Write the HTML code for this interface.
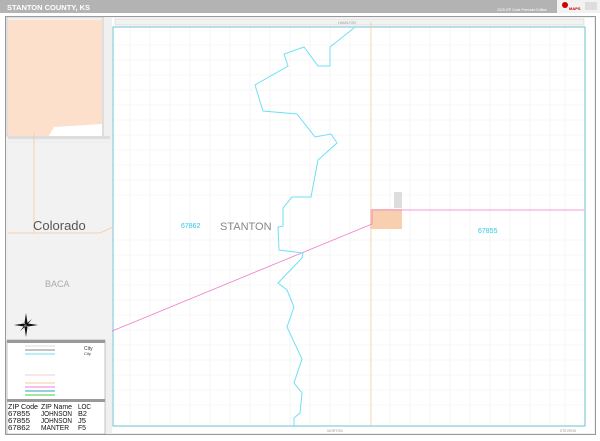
<!DOCTYPE html>
<html><head><meta charset="utf-8"><style>
body{margin:0;width:600px;height:436px;overflow:hidden;background:#fff;font-family:"Liberation Sans",sans-serif}
</style></head><body>
<svg width="600" height="436" xmlns="http://www.w3.org/2000/svg" font-family="Liberation Sans, sans-serif">
<rect x="0" y="0" width="600" height="436" fill="#fff"/>
<rect x="0" y="0" width="600" height="13" fill="#b3b3b3"/>
<text x="7" y="10" font-size="7.5" font-weight="bold" fill="#fff">STANTON COUNTY, KS</text>
<text x="497" y="11" font-size="3.5" fill="#fff">2025 ZIP Code Premium Edition</text>
<rect x="557" y="0" width="43" height="13" fill="#f2f2f2"/>
<circle cx="565" cy="5" r="3" fill="#c00"/>
<text x="569" y="10" font-size="4" font-weight="bold" fill="#c00">MAPS</text>
<rect x="585" y="2" width="12" height="8" fill="#ddd"/>
<rect x="5.5" y="16.5" width="590" height="418" fill="#f0f0f0" stroke="#999"/>
<rect x="112" y="18" width="482" height="415" fill="#fff"/>
<g stroke="#f0f0f0" stroke-width="0.6">
<path d="M130 22V426M150 22V426M170 22V426M190 22V426M210 22V426M230 22V426M250 22V426M270 22V426M290 22V426M310 22V426M330 22V426M350 22V426M390 22V426M410 22V426M430 22V426M450 22V426M470 22V426M490 22V426M510 22V426M530 22V426M550 22V426M565 22V426"/>
<path d="M112 45H584M112 60H584M112 75H584M112 90H584M112 105H584M112 120H584M112 135H584M112 150H584M112 165H584M112 180H584M112 195H584M112 240H584M112 255H584M112 270H584M112 285H584M112 300H584M112 315H584M112 330H584M112 345H584M112 360H584M112 375H584M112 390H584M112 405H584"/>
</g>
<rect x="115" y="19" width="469" height="6" fill="#f2f2f2" stroke="#ccc" stroke-width="0.5"/>
<text x="347" y="24" font-size="3.5" fill="#999" text-anchor="middle">HAMILTON</text>
<text x="335" y="432" font-size="3.5" fill="#999" text-anchor="middle">MORTON</text>
<text x="568" y="432" font-size="3.5" fill="#999" text-anchor="middle">STEVENS</text>
<path d="M113 27H585V426H113Z" fill="none" stroke="#6fc0cc" stroke-width="1"/>
<path d="M371 22V426" stroke="#f5c9a0" stroke-width="0.8"/>
<rect x="370" y="209" width="32" height="20" fill="#f8d0b0"/>
<rect x="394" y="192" width="8" height="16" fill="#ddd"/>
<path d="M100 336L372 224V210H584" fill="none" stroke="#f07cc8" stroke-width="0.8"/>
<path d="M354 28L330 47V66H318L304 47L284 54L288 66L255 85L263 111L297 114L315 137L331 134L337 143L318 160L311 197H292L283 208V226L278 227L279 250L303 253L302 258L278 283L287 290L294 307L287 327L302 359L294 383L302 393L300 413L294 418V427" fill="none" stroke="#6fe0f5" stroke-width="1"/>
<text x="181" y="228" font-size="7" fill="#2cc8e8">67862</text>
<text x="220" y="230" font-size="11" fill="#888">STANTON</text>
<text x="478" y="233" font-size="7" fill="#2cc8e8">67855</text>
<rect x="7" y="17" width="96" height="119" fill="#f0f0f0" stroke="#aaa" stroke-width="0.5"/>
<rect x="8" y="20" width="94" height="117" fill="#fde0cc"/>
<path d="M48 137L54 127L102 124V137Z" fill="#fff"/>
<rect x="8" y="136" width="102" height="3" fill="#ddd"/>
<rect x="8" y="143" width="104" height="196" fill="#f2f2f2"/>
<path d="M34 133V233M8 233H100L113 227" fill="none" stroke="#f5c9a0" stroke-width="0.8"/>
<text x="33" y="230" font-size="13" fill="#555">Colorado</text>
<text x="45" y="287" font-size="9" fill="#aaa">BACA</text>
<g transform="translate(26,325)" fill="#111">
<path d="M0 -12L1.5 -2L0 0L-1.5 -2Z M0 12L1.5 2L0 0L-1.5 2Z M-12 0L-2 1.5L0 0L-2 -1.5Z M12 0L2 1.5L0 0L2 -1.5Z M-6 -6L0 -1L1 0ZM6 6L0 1L-1 0ZM6 -6L1 0L0 -1ZM-6 6L-1 0L0 1Z"/>
</g>
<rect x="7" y="340" width="98" height="94" fill="#fff" stroke="#888" stroke-width="0.5"/>
<rect x="7" y="340" width="98" height="3" fill="#999"/>
<g stroke-width="1">
<path d="M25 346H55" stroke="#ddd"/><path d="M25 350H55" stroke="#888"/><path d="M25 354H55" stroke="#6fe0f5"/>
<path d="M25 375H55" stroke="#f7cccc"/><path d="M25 383H55" stroke="#f5c9a0"/><path d="M25 387H55" stroke="#f07cc8"/><path d="M25 391H55" stroke="#3399cc"/><path d="M25 395H55" stroke="#44cc44"/>
</g>
<text x="84" y="350" font-size="5" fill="#333">City</text>
<text x="84" y="355" font-size="4" fill="#333">City</text>
<rect x="7" y="399" width="98" height="3" fill="#999"/>
<g font-size="7.5" fill="#111" lengthAdjust="spacingAndGlyphs">
<text x="8" y="409" textLength="30" lengthAdjust="spacingAndGlyphs">ZIP Code</text><text x="41" y="409" textLength="31" lengthAdjust="spacingAndGlyphs">ZIP Name</text><text x="78" y="409" textLength="13" lengthAdjust="spacingAndGlyphs">LOC</text>
<text x="8" y="416" textLength="22" lengthAdjust="spacingAndGlyphs">67855</text><text x="41" y="416" textLength="31" lengthAdjust="spacingAndGlyphs">JOHNSON</text><text x="78" y="416" textLength="9" lengthAdjust="spacingAndGlyphs">B2</text>
<text x="8" y="423" textLength="22" lengthAdjust="spacingAndGlyphs">67855</text><text x="41" y="423" textLength="31" lengthAdjust="spacingAndGlyphs">JOHNSON</text><text x="78" y="423" textLength="8" lengthAdjust="spacingAndGlyphs">J5</text>
<text x="8" y="430" textLength="22" lengthAdjust="spacingAndGlyphs">67862</text><text x="41" y="430" textLength="28" lengthAdjust="spacingAndGlyphs">MANTER</text><text x="78" y="430" textLength="8" lengthAdjust="spacingAndGlyphs">F5</text>
</g>
</svg>
</body></html>
